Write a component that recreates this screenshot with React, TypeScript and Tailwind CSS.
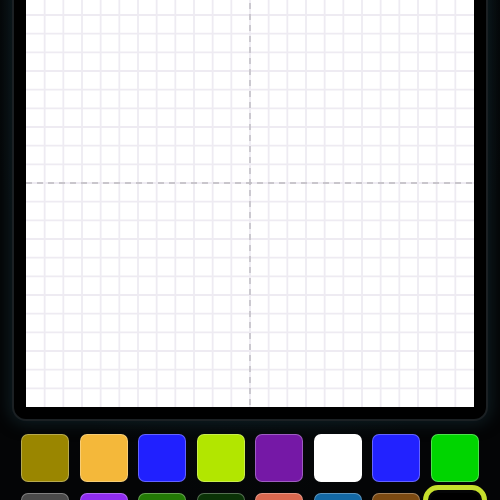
const SIZE = 448;
const CELLS = 24;

const colors = [
  '#9a8600', '#f4b83a', '#2020ff', '#b2e600', '#7518a6', '#ffffff', '#2222ff', '#00d500',
  '#4a4a4a', '#8f2cf0', '#237a05', '#0b3307', '#d9684f', '#1368a4', '#7c4a12', '#000000',
];

function Grid() {
  const step = SIZE / CELLS;
  const lines = Array.from({ length: CELLS - 1 }, (_, i) => (i + 1) * step);
  return (
    <svg width={SIZE} height={SIZE} viewBox={`0 0 ${SIZE} ${SIZE}`} className="block">
      <rect width={SIZE} height={SIZE} fill="#ffffff" />
      {lines.map((p) => (
        <g key={p} stroke="#eeebf2" strokeWidth="1.8">
          <line x1={p} y1={0} x2={p} y2={SIZE} />
          <line x1={0} y1={p} x2={SIZE} y2={p} />
        </g>
      ))}
      <g stroke="#bdbac0" strokeWidth="1.4" strokeDasharray="6 5">
        <line x1={SIZE / 2} y1={0} x2={SIZE / 2} y2={SIZE} />
        <line x1={0} y1={SIZE / 2} x2={SIZE} y2={SIZE / 2} />
      </g>
    </svg>
  );
}

export default function App() {
  return (
    <div className="w-full h-[500px] overflow-hidden bg-[radial-gradient(ellipse_at_top,#0a161c,#040506_75%)]">
      {/* drawing board */}
      <div className="pl-[14px] pr-[14px] -mt-[53px]">
        <div className="w-[472px] border-[12px] border-black bg-black rounded-[12px] shadow-[0_0_0_2px_#1b2023,0_0_16px_4px_rgba(24,52,62,0.55)]">
          <Grid />
        </div>
      </div>

      {/* palette */}
      <div className="grid grid-cols-8 gap-x-[10.5px] gap-y-[11px] px-[21px] mt-[15px]">
        {colors.map((c, i) => {
          const selected = i === colors.length - 1;
          return (
            <div
              key={i}
              className={
                selected
                  ? 'h-[48px] rounded-[7px] outline-[5px] outline-solid outline-offset-[3px] outline-[#c6df2c]'
                  : 'h-[48px] rounded-[7px] border border-white/30'
              }
              style={{ backgroundColor: c }}
            />
          );
        })}
      </div>
    </div>
  );
}
